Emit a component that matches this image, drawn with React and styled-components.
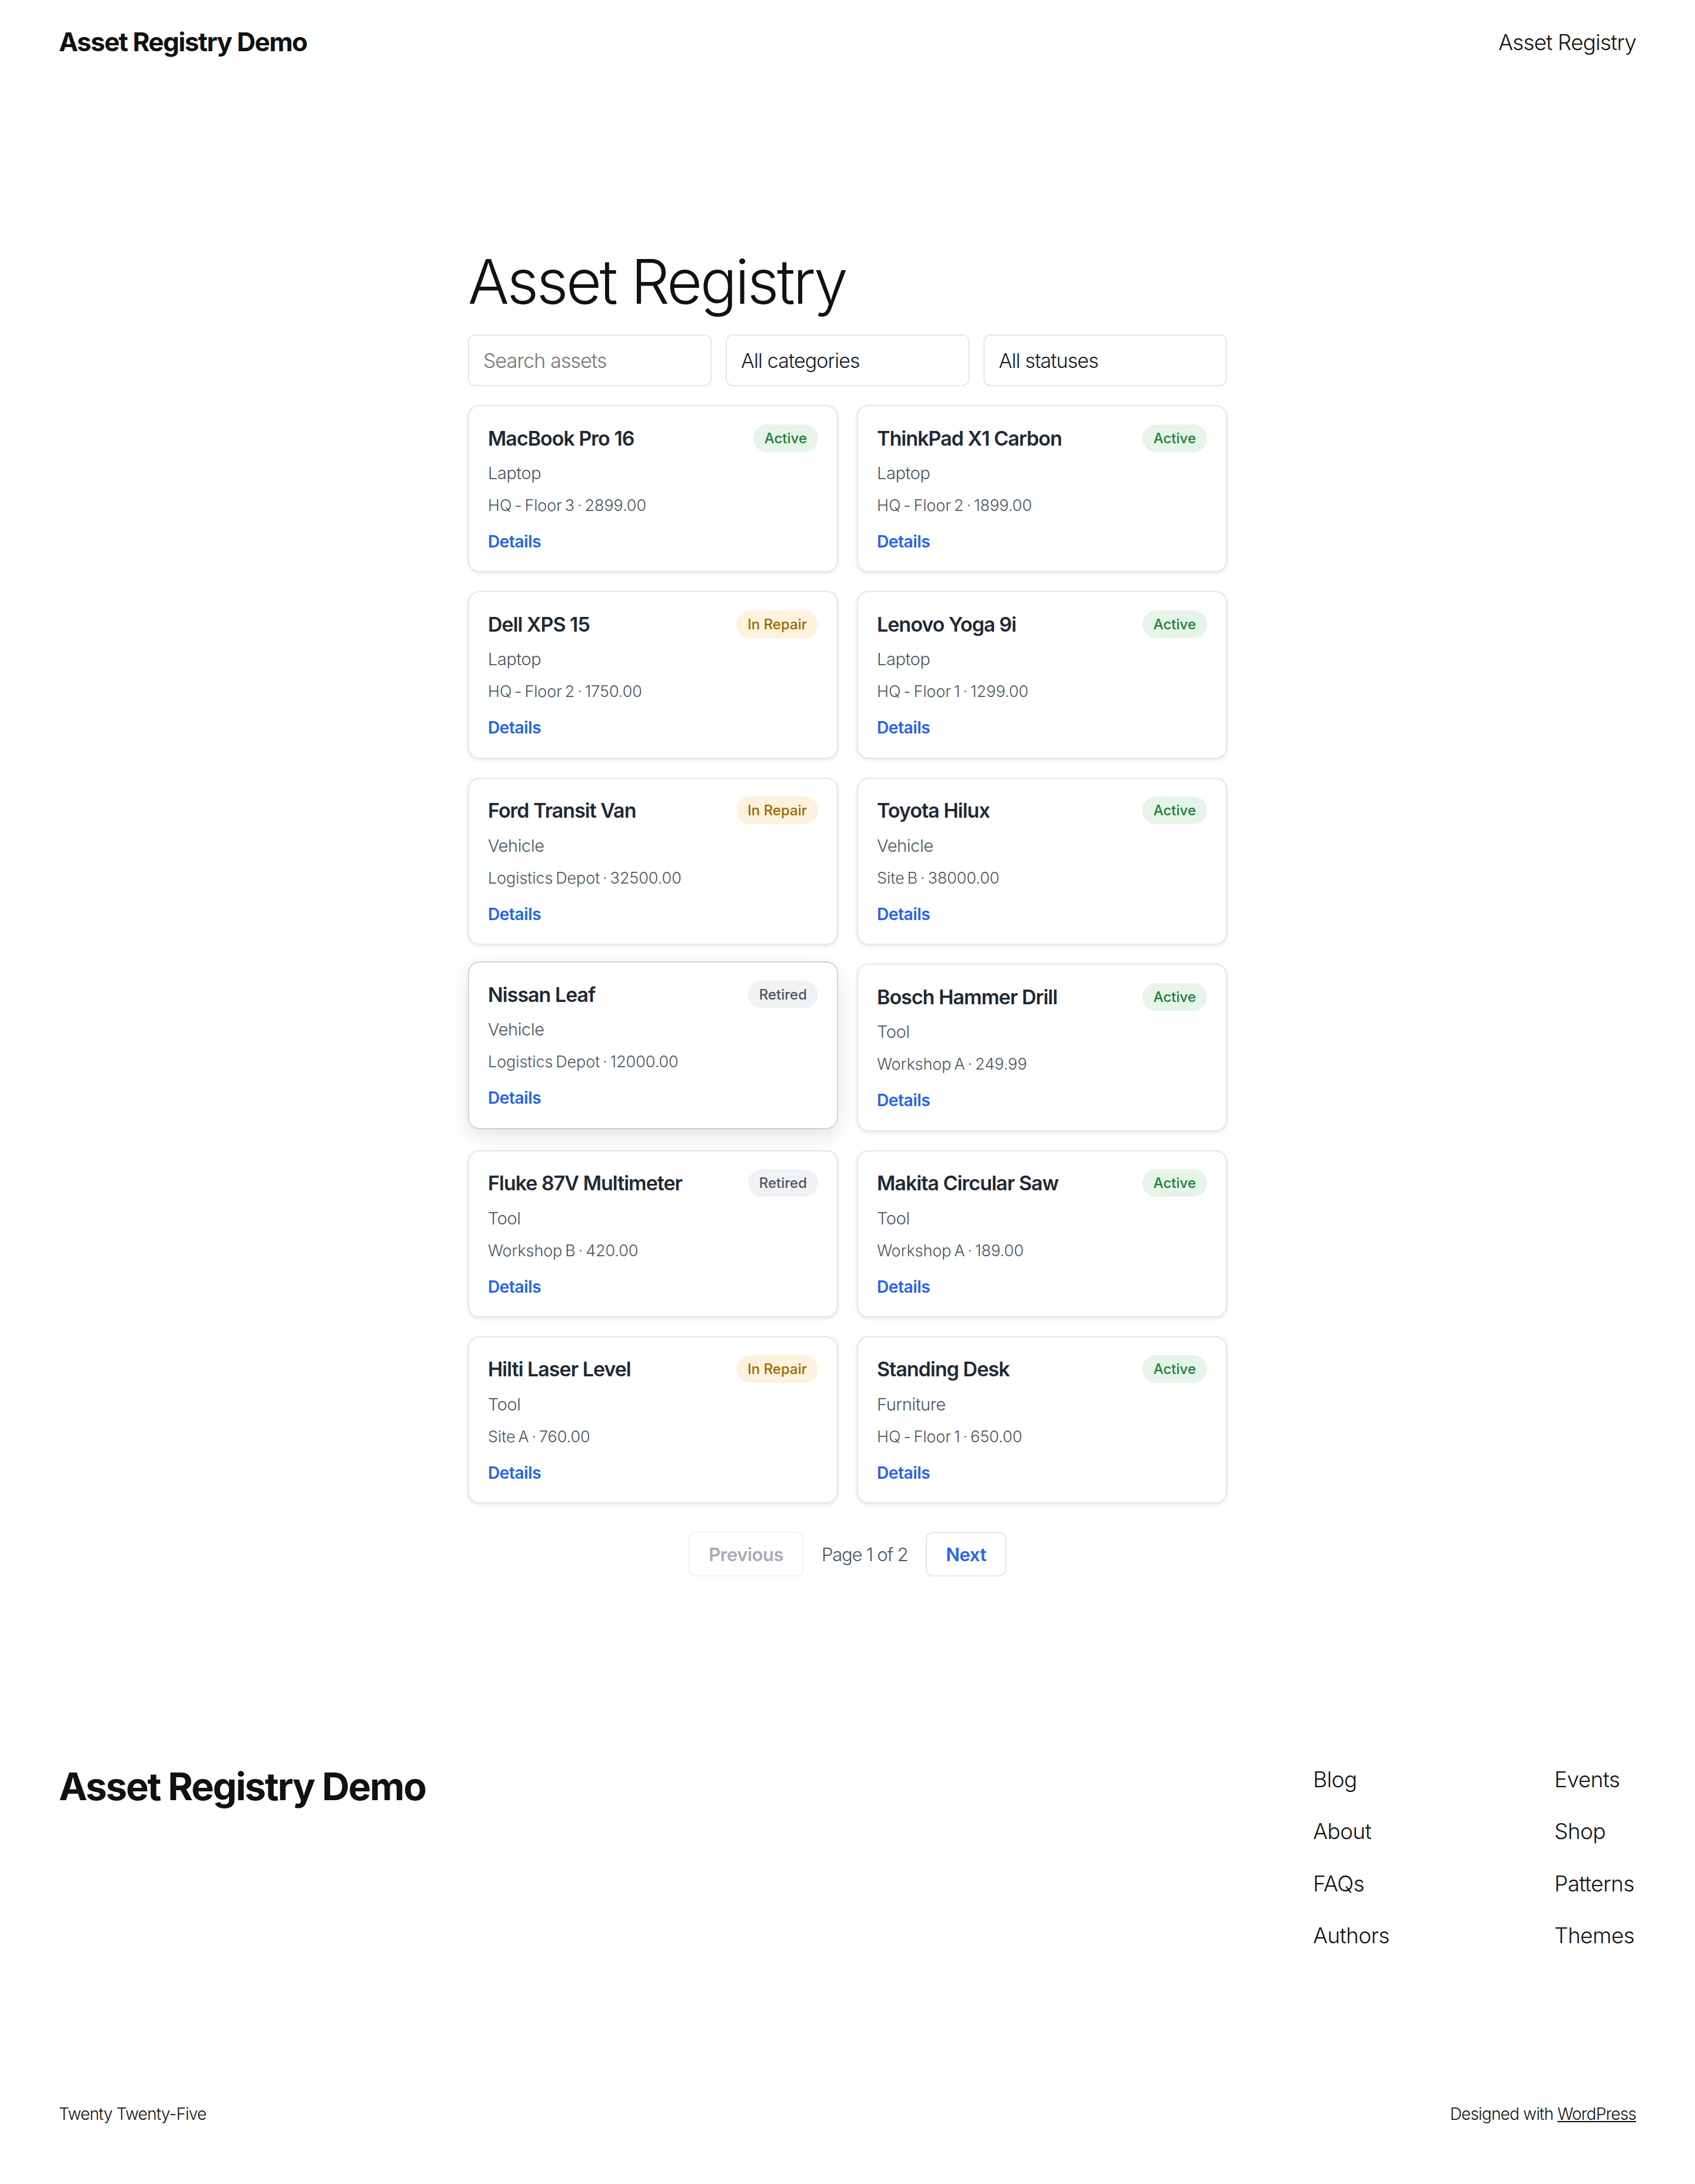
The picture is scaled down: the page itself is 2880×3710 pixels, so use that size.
import React from 'react'
import styled, { createGlobalStyle, css } from 'styled-components'

const GlobalStyle = createGlobalStyle`
html, body {
  margin: 0;
  padding: 0;
  background: #ffffff;
}
body {
  font-family: Inter, "Noto Sans", sans-serif;
  color: #111111;
}
* {
  box-sizing: border-box;
}
`

const Page = styled.div`
width: 2880px;
height: 3710px;
display: flex;
flex-direction: column;
background: #ffffff;
`

const Header = styled.header`
height: 142px;
padding: 0 100px;
display: flex;
align-items: center;
justify-content: space-between;
`

const SiteTitle = styled.a`
display: block;
font-size: ${props => props.$large ? '65px' : '44px'};
line-height: ${props => props.$large ? '68px' : '54px'};
font-weight: 700;
letter-spacing: ${props => props.$large ? '-2.2px' : '-1.5px'};
color: #111111;
text-decoration: none;
`

const NavLink = styled.a`
font-size: 37px;
font-weight: 300;
letter-spacing: -0.85px;
color: #111111;
`

const Main = styled.main`
width: 1290px;
margin: 0 auto;
padding-top: 270px;
`

const Heading = styled.h1`
margin: 0 0 24px;
height: 132px;
line-height: 132px;
font-size: 104px;
font-weight: 300;
letter-spacing: -3.5px;
color: #111111;
`

const Filters = styled.div`
display: grid;
grid-template-columns: repeat(3, 1fr);
gap: 24px;
margin-bottom: 32px;
`

const fieldStyles = css`
width: 100%;
height: 88px;
padding: 0 24px;
border: 2px solid #e5e7eb;
border-radius: 12px;
background: #ffffff;
font-family: Inter, "Noto Sans", sans-serif;
font-size: 34px;
font-weight: 300;
letter-spacing: -0.9px;
color: #111827;
outline: none;
`

const SearchInput = styled.input`
${fieldStyles}
&::placeholder {
  color: #757575;
  opacity: 1;
}
`

const FilterSelect = styled.select`
${fieldStyles}
appearance: none;
`

const Grid = styled.div`
display: grid;
grid-template-columns: repeat(2, 1fr);
gap: 32px;
`

const Card = styled.article`
height: 284.4px;
padding: 30px 32px;
border: 2px solid ${props => props.$hovered ? '#cbd5e1' : '#e5e7eb'};
border-radius: 20px;
background: #ffffff;
box-shadow: ${props => props.$hovered ? '0 12px 32px rgba(17, 24, 39, 0.12)' : '0 2px 6px rgba(17, 24, 39, 0.1)'};
transform: ${props => props.$hovered ? 'translateY(-4px)' : 'none'};
`

const CardTop = styled.div`
height: 48px;
display: flex;
align-items: center;
justify-content: space-between;
`

const CardTitle = styled.h3`
margin: 0;
font-size: 34px;
font-weight: 600;
letter-spacing: -1px;
color: #1f2937;
`

const badgeColors = {
  Active: 'background: #e6f4ea; color: #1a7f37;',
  'In Repair': 'background: #fdf2dd; color: #9a6700;',
  Retired: 'background: #f1f2f4; color: #4b5563;'
}

const Badge = styled.span`
height: 47px;
padding: 0 19px;
display: flex;
align-items: center;
border-radius: 24px;
font-size: 24px;
font-weight: 500;
letter-spacing: 0;
${props => badgeColors[props.$status]}
`

const Category = styled.div`
margin-top: 16px;
height: 40px;
line-height: 40px;
font-size: 29px;
font-weight: 300;
letter-spacing: -0.4px;
color: #4b5563;
`

const Meta = styled.div`
margin-top: 15px;
height: 40px;
line-height: 40px;
font-size: 27px;
font-weight: 300;
letter-spacing: -0.1px;
word-spacing: -2.5px;
color: #4b5563;
`

const DetailsLink = styled.a`
display: block;
margin-top: 21px;
height: 40px;
line-height: 40px;
font-size: 28px;
font-weight: 600;
letter-spacing: -0.4px;
color: #2563eb;
`

const Pager = styled.nav`
margin-top: 48px;
display: flex;
align-items: center;
justify-content: center;
gap: 31px;
`

const PagerButton = styled.button`
height: 76px;
padding: 0 32px;
border: 2px solid ${props => props.disabled ? '#f0f1f3' : '#e5e7eb'};
border-radius: 12px;
background: #ffffff;
font-family: Inter, "Noto Sans", sans-serif;
font-size: 31px;
font-weight: 600;
letter-spacing: -0.5px;
color: ${props => props.disabled ? '#a8adb7' : '#2563eb'};
`

const PageLabel = styled.span`
font-size: 31px;
font-weight: 300;
letter-spacing: -1.2px;
color: #4b5563;
`

const Footer = styled.footer`
margin-top: auto;
padding: 0 100px 102px;
`

const FooterTop = styled.div`
display: flex;
justify-content: space-between;
align-items: flex-start;
`

const FooterNav = styled.div`
width: 549px;
display: grid;
grid-template-columns: 410px 1fr;
grid-auto-rows: 88.6px;
`

const FooterLink = styled.a`
font-size: 37px;
line-height: 44px;
font-weight: 300;
letter-spacing: -0.6px;
color: #111111;
`

const FooterBottom = styled.div`
margin-top: 219px;
display: flex;
justify-content: space-between;
font-size: 28px;
font-weight: 300;
letter-spacing: -0.8px;
color: #111111;
`

const Underlined = styled.a`
color: #111111;
text-decoration: underline;
`

const assets = [
  { name: 'MacBook Pro 16', status: 'Active', category: 'Laptop', meta: 'HQ - Floor 3 · 2899.00' },
  { name: 'ThinkPad X1 Carbon', status: 'Active', category: 'Laptop', meta: 'HQ - Floor 2 · 1899.00' },
  { name: 'Dell XPS 15', status: 'In Repair', category: 'Laptop', meta: 'HQ - Floor 2 · 1750.00' },
  { name: 'Lenovo Yoga 9i', status: 'Active', category: 'Laptop', meta: 'HQ - Floor 1 · 1299.00' },
  { name: 'Ford Transit Van', status: 'In Repair', category: 'Vehicle', meta: 'Logistics Depot · 32500.00' },
  { name: 'Toyota Hilux', status: 'Active', category: 'Vehicle', meta: 'Site B · 38000.00' },
  { name: 'Nissan Leaf', status: 'Retired', category: 'Vehicle', meta: 'Logistics Depot · 12000.00', hovered: true },
  { name: 'Bosch Hammer Drill', status: 'Active', category: 'Tool', meta: 'Workshop A · 249.99' },
  { name: 'Fluke 87V Multimeter', status: 'Retired', category: 'Tool', meta: 'Workshop B · 420.00' },
  { name: 'Makita Circular Saw', status: 'Active', category: 'Tool', meta: 'Workshop A · 189.00' },
  { name: 'Hilti Laser Level', status: 'In Repair', category: 'Tool', meta: 'Site A · 760.00' },
  { name: 'Standing Desk', status: 'Active', category: 'Furniture', meta: 'HQ - Floor 1 · 650.00' }
]

const footerLinks = ['Blog', 'Events', 'About', 'Shop', 'FAQs', 'Patterns', 'Authors', 'Themes']

function App() {
  return (
    <Page>
      <GlobalStyle />
      <Header>
        <SiteTitle>Asset Registry Demo</SiteTitle>
        <NavLink>Asset Registry</NavLink>
      </Header>

      <Main>
        <Heading>Asset Registry</Heading>

        <Filters>
          <SearchInput type="text" placeholder="Search assets" />
          <FilterSelect defaultValue="all">
            <option value="all">All categories</option>
          </FilterSelect>
          <FilterSelect defaultValue="all">
            <option value="all">All statuses</option>
          </FilterSelect>
        </Filters>

        <Grid>
          {assets.map(asset => (
            <Card key={asset.name} $hovered={asset.hovered}>
              <CardTop>
                <CardTitle>{asset.name}</CardTitle>
                <Badge $status={asset.status}>{asset.status}</Badge>
              </CardTop>
              <Category>{asset.category}</Category>
              <Meta>{asset.meta}</Meta>
              <DetailsLink>Details</DetailsLink>
            </Card>
          ))}
        </Grid>

        <Pager>
          <PagerButton disabled>Previous</PagerButton>
          <PageLabel>Page 1 of 2</PageLabel>
          <PagerButton>Next</PagerButton>
        </Pager>
      </Main>

      <Footer>
        <FooterTop>
          <SiteTitle $large>Asset Registry Demo</SiteTitle>
          <FooterNav>
            {footerLinks.map(link => (
              <FooterLink key={link}>{link}</FooterLink>
            ))}
          </FooterNav>
        </FooterTop>
        <FooterBottom>
          <span>Twenty Twenty-Five</span>
          <span>Designed with <Underlined>WordPress</Underlined></span>
        </FooterBottom>
      </Footer>
    </Page>
  )
}

export default App
